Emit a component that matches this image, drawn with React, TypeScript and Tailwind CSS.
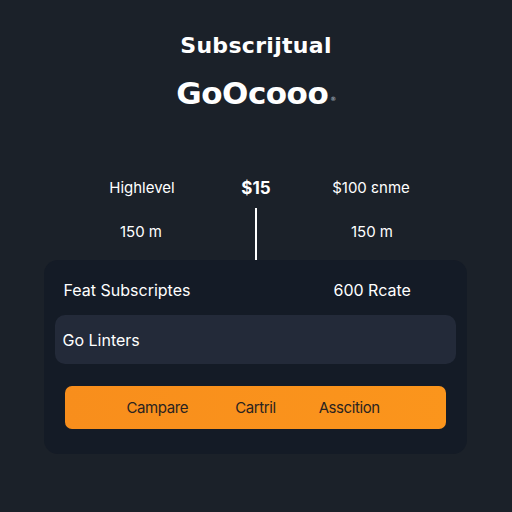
export default function App() {
  const font = { fontFamily: 'Inter, "Noto Sans", sans-serif' };
  const heading = { fontFamily: '"DejaVu Sans", Inter, sans-serif' };

  return (
    <div className="w-[512px] h-[512px] bg-[#1b2129] text-white flex flex-col items-center overflow-hidden" style={font}>
      {/* Heading */}
      <div className="mt-[33px] text-[22px] leading-[26px] font-bold tracking-[0.3px]" style={heading}>
        Subscrijtual
      </div>
      <div className="mt-[16px] text-[31px] leading-[36px] font-bold flex items-end tracking-[-0.5px]" style={heading}>
        GoOcooo
        <span className="text-[6px] leading-[6px] mb-[9px] ml-[2px] text-gray-400">®</span>
      </div>

      {/* Pricing rows */}
      <div className="mt-[67px] w-[342px] grid grid-cols-3 text-[15px] leading-[20px] text-center">
        <div>Highlevel</div>
        <div className="font-bold text-[17px]">$15</div>
        <div className="pl-[2px]">$100 ɛnme</div>
      </div>
      <div className="relative w-[342px] h-[61px] mt-[1px]">
        <div className="grid grid-cols-3 text-[15px] leading-[20px] mt-[23px] text-center">
          <div className="pr-[2px]">150 m</div>
          <div />
          <div className="pl-[4px]">150 m</div>
        </div>
        <div className="absolute left-[170px] top-[9px] w-[2px] h-[52px] bg-white" />
      </div>

      {/* Card */}
      <div className="w-[423px] ml-[-2px] rounded-[14px] bg-[#141b26] px-[11px] pt-[20px] pb-[25px]">
        <div className="flex text-[16px] leading-[20px] px-[9px]">
          <span className="w-[270px]">Feat Subscriptes</span>
          <span>600 Rcate</span>
        </div>
        <div className="mt-[15px] h-[49px] rounded-[10px] bg-[#232a39] flex items-center px-[8px] text-[16px]">
          Go Linters
        </div>
        <div className="mt-[22px] mx-[10px] h-[43px] rounded-[7px] bg-gradient-to-r from-[#f88e1c] to-[#fb951c] flex items-center text-[15px] tracking-[-0.4px] text-[#2a2320] pt-[1px]">
          <span className="ml-[62px]">Campare</span>
          <span className="ml-[47px]">Cartril</span>
          <span className="ml-[43px]">Asscition</span>
        </div>
      </div>
    </div>
  );
}
